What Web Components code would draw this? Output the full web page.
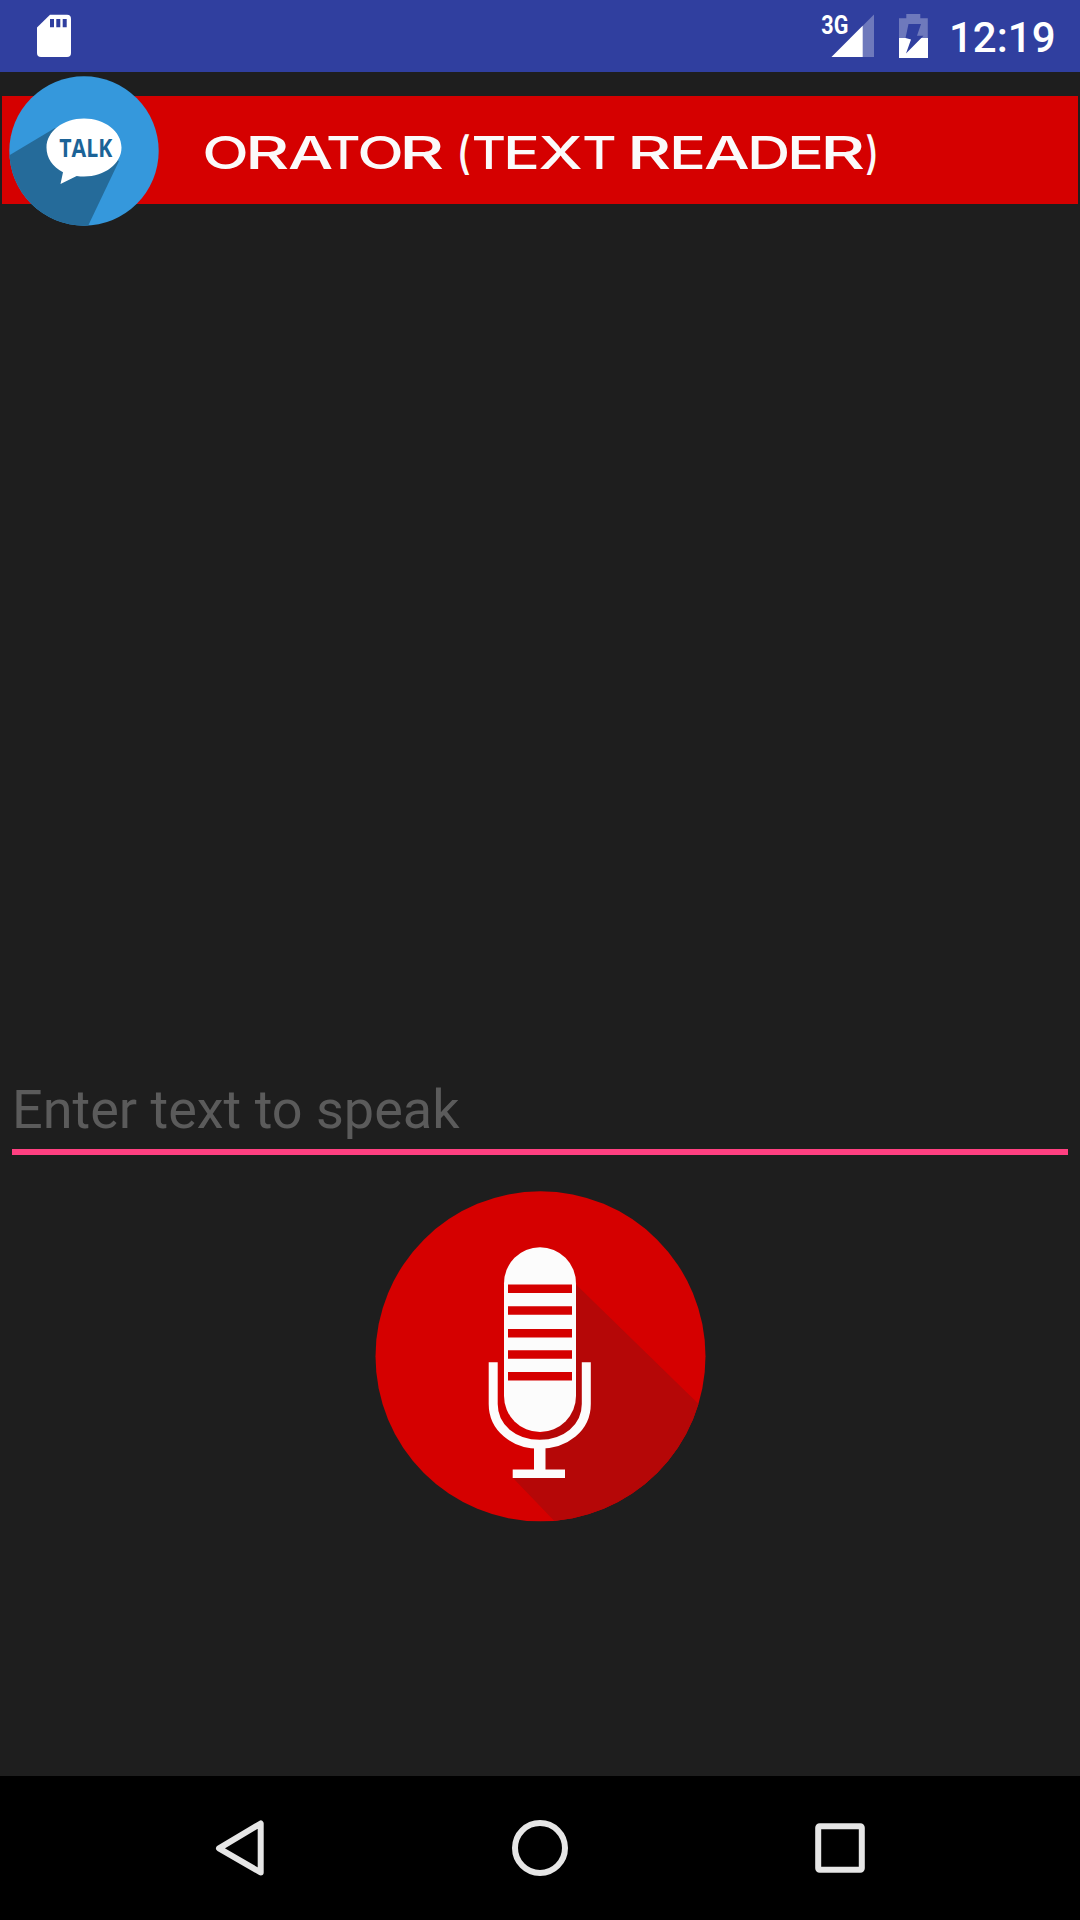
<!DOCTYPE html>
<html lang="en">
<head>
<meta charset="utf-8">
<title>Orator</title>
<style>
html,body{margin:0;height:100%;background:#1e1e1e}
body{font-family:Roboto,"Noto Sans",sans-serif}
</style>
</head>
<body>
<orator-app></orator-app>
<script>
const define = (name, html, setup) => customElements.define(name, class extends HTMLElement {
  constructor() {
    super();
    this.attachShadow({mode: 'open'}).innerHTML = html;
    if (setup) setup(this.shadowRoot);
  }
});

define('status-bar', `
<style>
:host{display:flex;height:72px;background:#303f9f;color:#fff;align-items:center;box-sizing:border-box;padding:0 27px 0 37px}
svg{display:block;flex:none}
.sd{margin-right:auto}
.signal{margin-right:25px}
.battery{margin-right:21px}
.clock{font:500 42px/72px Roboto,sans-serif;padding-top:3px;width:104px;white-space:nowrap}
</style>
<svg class="sd" width="34" height="72" viewBox="37 0 34 72"><path fill="#fff" d="M50 14.7H67a4 4 0 0 1 4 4V53a4 4 0 0 1-4 4H41a4 4 0 0 1-4-4V27.5Z"/><path fill="#303f9f" d="M50 19h4v8.300h-4zM56.300 19h4v8.300h-4zM62.700 19h4v8.300h-4z"/></svg>
<svg class="signal" width="54" height="72" viewBox="820 0 54 72"><path fill="#fff" fill-opacity=".3" d="M874 14.500V57H831.500Z"/><path fill="#fff" d="M862.700 25.800V57H831.500Z"/><text x="821.300" y="33.500" textLength="27" lengthAdjust="spacingAndGlyphs" font-family="Roboto,sans-serif" font-size="25.500" font-weight="700" fill="#fff">3G</text></svg>
<svg class="battery" width="29" height="72" viewBox="899 0 29 72"><defs><mask id="m"><path fill="#fff" d="M899 0h29v72h-29z"/><path fill="#000" d="M908.500 24H921L917 35.700H923.500L906 53.500 911 39.500 905.500 38z"/></mask></defs><g mask="url(#m)"><path fill="#fff" fill-opacity=".3" d="M906.300 14h14v4.200h7.500V38H899V18.200h7.300z"/><path fill="#fff" d="M899 38h29v20h-29z"/></g></svg>
<span class="clock">12:19</span>`);

define('talk-logo', `
<style>:host,svg{display:block}</style>
<svg width="150" height="150" viewBox="9 76 150 150">
<defs><clipPath id="c"><circle cx="84" cy="151" r="74.700"/></clipPath></defs>
<circle cx="84" cy="151" r="74.700" fill="#3598dc"/>
<path clip-path="url(#c)" fill="#256b9a" d="M9 155.500 55 128 119 161 88 226H9z"/>
<path fill="#fff" d="M84 118.500c20.800 0 37.500 12.800 37.500 29s-16.700 29-37.500 29c-2.500 0-5-.2-7.300-.6L60.500 184l2.500-11.800C52.500 167 46.500 158 46.500 147.500c0-16.200 16.700-29 37.500-29z"/>
<text x="59.300" y="157.300" textLength="53" lengthAdjust="spacingAndGlyphs" font-family="'Open Sans',sans-serif" font-weight="700" font-size="24.500" fill="#1c6397">TALK</text>
</svg>`);

define('app-header', `
<style>
:host{display:block;position:relative;padding:24px 2px 0}
.band{height:107.500px;background:#d50000}
svg{display:block}
talk-logo{position:absolute;left:9px;top:4px}
</style>
<div class="band"><svg width="1076" height="107.500" viewBox="2 96 1076 107.500"><text y="169.300" font-family="Inter,sans-serif" font-size="45" font-weight="500" fill="#fbfafa" xml:space="preserve"></text></svg></div>
<talk-logo></talk-logo>`, root => {
  // Wide display lettering: left and right edge of each glyph of the title
  const title = 'ORATOR (TEXT READER)';
  const edges = [[205,245.5],[249.5,287.5],[289.5,332],[327.5,359],[360,400.5],[404,442.500],null,
    [460,469.5],[473,504.5],[507,537],[540,582],[583.5,615],null,
    [631.5,669.5],[673,703],[705.5,748.5],[751,787],[791,821],[825,863.5],[866,876]];
  const ctx = document.createElement('canvas').getContext('2d');
  ctx.font = '500 45px Inter, sans-serif';
  const text = root.querySelector('text');
  [...title].forEach((ch, i) => {
    const span = document.createElementNS('http://www.w3.org/2000/svg', 'tspan');
    span.textContent = ch;
    if (edges[i]) {
      const [left, right] = edges[i];
      const m = ctx.measureText(ch);
      const scale = (right - left) / (m.actualBoundingBoxLeft + m.actualBoundingBoxRight);
      span.setAttribute('x', left + m.actualBoundingBoxLeft * scale);
      span.setAttribute('textLength', m.width * scale);
      span.setAttribute('lengthAdjust', 'spacingAndGlyphs');
    }
    text.append(span);
  });
});

define('speech-field', `
<style>
:host{display:block;box-sizing:border-box;margin:0 12px;height:83px;padding-top:6px;border-bottom:6px solid #ff4081;color:#5b5b5b;font:400 54px/64px Roboto,sans-serif}
</style>
<slot></slot>`);

define('mic-button', `
<style>:host,svg{display:block}</style>
<svg width="332" height="332" viewBox="374 1190 332 332">
<defs><clipPath id="c"><circle cx="540.500" cy="1356.300" r="165"/></clipPath></defs>
<circle cx="540.500" cy="1356.300" r="165" fill="#d50000"/>
<path clip-path="url(#c)" fill="#b50707" d="M575.500 1284 720 1425V1530H563L513 1478H540V1434C567 1427 576 1410 576 1390z"/>
<rect x="504" y="1247.300" width="72" height="184.700" rx="36" fill="#fcfcfc"/>
<path fill="#d50000" d="M508 1284.500h64v8.500h-64zM508 1306.300h64v8.500h-64zM508 1329h64v8.500h-64zM508 1350.300h64v8.500h-64zM508 1372h64v8.500h-64z"/>
<path fill="none" stroke="#fcfcfc" stroke-width="9" d="M493.200 1362.300V1404C493.200 1428 514 1444.200 539.700 1444.200S586.300 1428 586.300 1404V1362.300"/>
<path fill="#fcfcfc" d="M534 1448h11.500v21.500H565v8.500H512.700v-8.500H534z"/>
</svg>`);

define('nav-bar', `
<style>
:host{display:flex;height:144px;background:#000;justify-content:center;gap:228px}
svg{display:block;flex:none}
</style>
<svg width="72" height="144" viewBox="204 1776 72 144"><path fill="none" stroke="#e6e6e6" stroke-width="6" stroke-linejoin="round" d="M260.700 1823.500V1872.500L219 1848.300Z"/></svg>
<svg width="72" height="144" viewBox="504 1776 72 144"><circle cx="540" cy="1848" r="25" fill="none" stroke="#e6e6e6" stroke-width="6"/></svg>
<svg width="72" height="144" viewBox="804 1776 72 144"><rect x="818.200" y="1826.200" width="43.600" height="43.600" rx="1.500" fill="none" stroke="#e6e6e6" stroke-width="6"/></svg>`);

define('orator-app', `
<style>
:host{display:flex;flex-direction:column;width:1080px;height:1920px;background:#1e1e1e;overflow:hidden}
main{flex:1;display:flex;flex-direction:column}
app-header{height:131.500px;box-sizing:border-box}
.output{height:868.500px}
mic-button{align-self:center;margin-top:35px}
</style>
<status-bar></status-bar>
<main><app-header></app-header><div class="output"></div><speech-field>Enter text to speak</speech-field><mic-button></mic-button></main>
<nav-bar></nav-bar>`);
</script>
</body>
</html>
